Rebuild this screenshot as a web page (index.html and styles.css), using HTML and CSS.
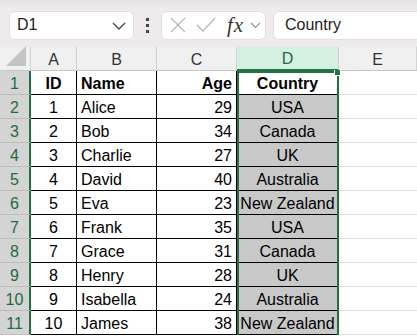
FILE: index.html
```html
<!DOCTYPE html>
<html lang="en">
<head>
    <meta charset="UTF-8">
    <meta name="viewport" content="width=device-width, initial-scale=1.0">
    <title>Sheet</title>
    <link rel="stylesheet" href="styles.css">
</head>
<body>

<div class="toolbar">
    <div class="namebox">
        <span>D1</span>
        <svg class="chev" width="14" height="8" viewBox="0 0 14 8"><path d="M1 1l6 6 6-6" fill="none" stroke="#444" stroke-width="1.4"/></svg>
    </div>
    <div class="dots"><i></i><i></i><i></i></div>
    <div class="fbuttons">
        <svg width="18" height="18" viewBox="0 0 18 18"><path d="M2 2l14 14M16 2L2 16" stroke="#b8b8b8" stroke-width="1.3" fill="none"/></svg>
        <svg width="20" height="16" viewBox="0 0 20 16"><path d="M1 8l6 6L19 1" stroke="#b8b8b8" stroke-width="1.3" fill="none"/></svg>
        <span class="fx">fx</span>
        <svg width="11" height="7" viewBox="0 0 11 7"><path d="M1 1l4.5 4.5L10 1" fill="none" stroke="#999" stroke-width="1.2"/></svg>
    </div>
    <div class="formula">Country</div>
</div>

<div class="sheet">
    <div class="grid">
        <div class="corner"><svg width="22" height="22" viewBox="0 0 22 22"><path d="M21 1V21H1Z" fill="#c4c4c4"/></svg></div>
        <div class="colhead">A</div>
        <div class="colhead">B</div>
        <div class="colhead">C</div>
        <div class="colhead sel">D</div>
        <div class="colhead">E</div>

        <div class="rowhead">1</div>
        <div class="c mid b">ID</div>
        <div class="c left b">Name</div>
        <div class="c right b">Age</div>
        <div class="c mid b">Country</div>
        <div class="e"></div>

        <div class="rowhead">2</div>
        <div class="c mid">1</div>
        <div class="c left">Alice</div>
        <div class="c right">29</div>
        <div class="c mid fill">USA</div>
        <div class="e"></div>

        <div class="rowhead">3</div>
        <div class="c mid">2</div>
        <div class="c left">Bob</div>
        <div class="c right">34</div>
        <div class="c mid fill">Canada</div>
        <div class="e"></div>

        <div class="rowhead">4</div>
        <div class="c mid">3</div>
        <div class="c left">Charlie</div>
        <div class="c right">27</div>
        <div class="c mid fill">UK</div>
        <div class="e"></div>

        <div class="rowhead">5</div>
        <div class="c mid">4</div>
        <div class="c left">David</div>
        <div class="c right">40</div>
        <div class="c mid fill">Australia</div>
        <div class="e"></div>

        <div class="rowhead">6</div>
        <div class="c mid">5</div>
        <div class="c left">Eva</div>
        <div class="c right">23</div>
        <div class="c mid fill">New Zealand</div>
        <div class="e"></div>

        <div class="rowhead">7</div>
        <div class="c mid">6</div>
        <div class="c left">Frank</div>
        <div class="c right">35</div>
        <div class="c mid fill">USA</div>
        <div class="e"></div>

        <div class="rowhead">8</div>
        <div class="c mid">7</div>
        <div class="c left">Grace</div>
        <div class="c right">31</div>
        <div class="c mid fill">Canada</div>
        <div class="e"></div>

        <div class="rowhead">9</div>
        <div class="c mid">8</div>
        <div class="c left">Henry</div>
        <div class="c right">28</div>
        <div class="c mid fill">UK</div>
        <div class="e"></div>

        <div class="rowhead">10</div>
        <div class="c mid">9</div>
        <div class="c left">Isabella</div>
        <div class="c right">24</div>
        <div class="c mid fill">Australia</div>
        <div class="e"></div>

        <div class="rowhead">11</div>
        <div class="c mid">10</div>
        <div class="c left">James</div>
        <div class="c right">38</div>
        <div class="c mid fill">New Zealand</div>
        <div class="e"></div>
    </div>
    <div class="selection"><span class="handle"></span></div>
</div>

</body>
</html>
```

FILE: styles.css
```css
body {
    margin: 0;
    font-family: "Liberation Sans", Arial, sans-serif;
    background: #fff;
    overflow: hidden;
}
.toolbar {
    height: 47px;
    box-sizing: border-box;
    background: linear-gradient(#e7e3e4, #efebec 8px);
    display: flex;
    align-items: center;
    padding: 3px 0 0 9px;
}
.namebox {
    width: 125px;
    height: 29px;
    box-sizing: border-box;
    background: #fff;
    border: 1px solid #e3dfe0;
    border-radius: 6px;
    display: flex;
    align-items: center;
    justify-content: space-between;
    padding: 0 7px 0 7px;
    font-size: 16px;
    color: #222;
}
.chev {
    margin-top: 1px;
}
.dots {
    width: 27px;
    display: flex;
    flex-direction: column;
    align-items: center;
    gap: 3px;
}
.dots i {
    width: 3px;
    height: 3px;
    background: #444;
}
.fbuttons {
    width: 105px;
    height: 29px;
    box-sizing: border-box;
    background: #fff;
    border: 1px solid #e3dfe0;
    border-radius: 6px;
    display: flex;
    align-items: center;
    padding-left: 7px;
    gap: 9px;
}
.fx {
    font-family: "Liberation Serif", serif;
    font-style: italic;
    font-size: 21px;
    color: #333;
    margin-left: 2px;
    margin-right: -3px;
    letter-spacing: 1px;
}
.formula {
    flex: 1;
    height: 29px;
    box-sizing: border-box;
    margin-left: 7px;
    background: #fff;
    border: 1px solid #e3dfe0;
    border-right: none;
    border-radius: 6px 0 0 6px;
    padding-left: 11px;
    display: flex;
    align-items: center;
    font-size: 16px;
    color: #222;
}
.sheet {
    position: relative;
}
.grid {
    display: grid;
    grid-template-columns: 31px 46px 80px 80px 102px 1fr;
    grid-template-rows: 24px;
    grid-auto-rows: 24px;
}
.grid > div {
    box-sizing: border-box;
    display: flex;
    align-items: center;
    font-size: 16px;
    color: #000;
    white-space: nowrap;
}
.corner {
    background: #f0f0f0;
    border-right: 1px solid #d2d2d2;
    border-bottom: 1px solid #c6c6c6;
    justify-content: flex-end;
    align-items: flex-end !important;
    padding: 0 3px 3px 0;
}
.colhead {
    background: #f0f0f0;
    border-right: 1px solid #d2d2d2;
    border-bottom: 1px solid #c6c6c6;
    justify-content: center;
    color: #333 !important;
    padding-top: 2px;
}
.colhead.sel {
    background: #d3f0e0;
    color: #1e6b41 !important;
    border-bottom: 2px solid #217346;
}
.rowhead {
    background: #d4d4d4;
    border-right: 2px solid #217346;
    border-bottom: 1px solid #bdbdbd;
    justify-content: center;
    color: #1e6b41 !important;
    padding-top: 2px;
}
.c {
    border-right: 1px solid #000;
    border-bottom: 1px solid #000;
    padding: 2px 4px 0;
}
.left { justify-content: flex-start; }
.mid { justify-content: center; padding: 2px 0 0; }
.right { justify-content: flex-end; }
.b { font-weight: bold; }
.fill { background: #c8c8c8; }
.e {
    border-bottom: 1px solid #e1e1e1;
}
.selection {
    position: absolute;
    left: 237px;
    top: 24px;
    width: 102px;
    height: 270px;
    box-sizing: border-box;
    border: 2px solid #217346;
    border-bottom: none;
}
.handle {
    position: absolute;
    right: -4px;
    top: -3px;
    width: 5px;
    height: 5px;
    background: #217346;
    border: 1px solid #fff;
    border-top: none;
}
```
